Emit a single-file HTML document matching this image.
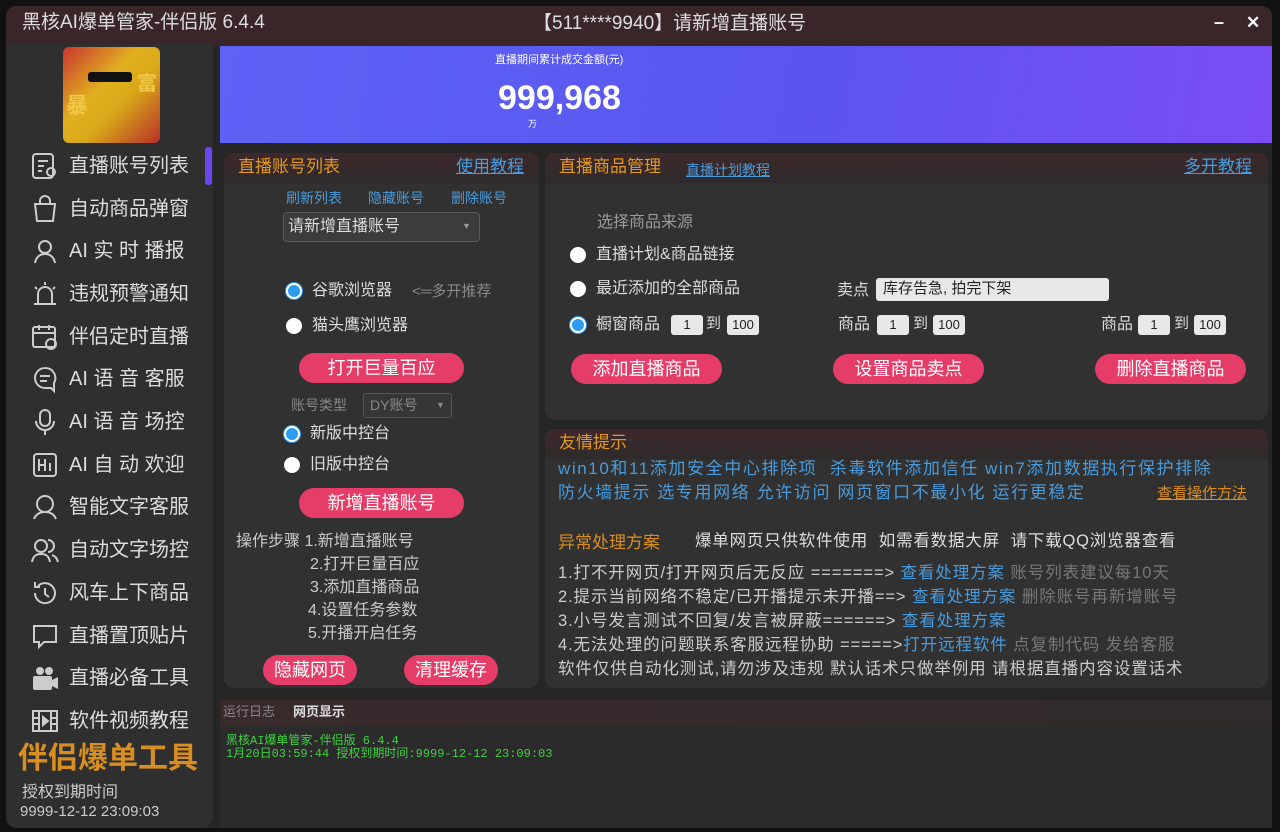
<!DOCTYPE html>
<html><head><meta charset="utf-8"><style>
*{margin:0;padding:0;box-sizing:border-box}
body{width:1280px;height:832px;background:#111;font-family:"Liberation Sans","Noto Sans CJK SC",sans-serif;position:relative;overflow:hidden;color:#ddd}
.a{position:absolute}
.win{left:6px;top:6px;width:1266px;height:822px;background:#262626;border-radius:10px;overflow:hidden}
.title{left:0;top:0;width:1266px;height:40px;background:#3a2629}
.side{left:6px;top:44px;width:207px;height:784px;background:#2f2f2f;border-radius:0 0 12px 12px}
.nav{position:absolute;left:30px;font-size:20px;color:#ddd;white-space:nowrap;line-height:22px}
.nav svg{position:absolute;left:0;top:-4px}
.nav span{position:absolute;left:39px;top:0}
.panel{background:#313131;border-radius:10px;overflow:hidden}
.ph{height:30px;background:linear-gradient(#3e282b,#2e2a2b);color:#e39a1c;font-size:17px;padding:3px 0 0 14px;line-height:22px}
.btn{position:absolute;height:30px;background:#e53d67;border-radius:15px;color:#fff;font-size:18px;text-align:center;line-height:30px}
.lnk{color:#4a9bdc;text-decoration:underline}
.radio{position:absolute;width:16px;height:16px;border-radius:50%;background:#fff}
.radio.on{background:#2c9bf0;border:2px solid #fff;box-shadow:0 0 0 1px #2c9bf0}
.t{position:absolute;white-space:nowrap;line-height:1.2}
.num{position:absolute;height:20px;background:#e8e8e8;color:#222;font-size:13px;text-align:center;line-height:20px;border-radius:3px}
.wide{letter-spacing:1.6px}
</style></head><body>
<div class="a win"></div>
<div class="a title" style="left:6px;top:6px;border-radius:10px 10px 0 0"></div>
<div class="t" style="left:22px;top:12px;font-size:19px;color:#ddd">黑核AI爆单管家-伴侣版 6.4.4</div>
<div class="t" style="left:533px;top:13px;font-size:19px;color:#ddd">【511****9940】请新增直播账号</div>
<div class="t" style="left:1214px;top:12px;font-size:18px;color:#fff;font-weight:bold">–</div>
<div class="t" style="left:1246px;top:13px;font-size:17px;color:#fff;font-weight:bold">✕</div>
<div class="a side"></div>
<div class="a" style="left:63px;top:47px;width:97px;height:96px;background:linear-gradient(135deg,#c9352f,#e0b020 40%,#d8a818 60%,#b8302a);border-radius:6px"></div>
<div class="t" style="left:66px;top:93px;font-size:22px;color:#f0c848;font-weight:bold">暴</div>
<div class="t" style="left:137px;top:72px;font-size:20px;color:#f0c848;font-weight:bold">富</div>
<div class="a" style="left:88px;top:72px;width:44px;height:10px;background:#111;border-radius:3px"></div>
<div class="a" style="left:205px;top:147px;width:7px;height:38px;background:#6a46f0;border-radius:3px"></div>

<div class="nav" style="top:155px"><svg width="30" height="30" viewBox="0 0 30 30" fill="none" stroke="#ccc" stroke-width="2"><rect x="3" y="3" width="20" height="24" rx="3"/><path d="M8 10h10M8 15h6M8 20h4"/><circle cx="21" cy="21" r="4"/></svg><span>直播账号列表</span></div>
<div class="nav" style="top:198px"><svg width="30" height="30" viewBox="0 0 30 30" fill="none" stroke="#ccc" stroke-width="2"><path d="M5 10h20l-2 17H7z"/><path d="M10 10V7a5 5 0 0110 0v3"/></svg><span>自动商品弹窗</span></div>
<div class="nav" style="top:240px"><svg width="30" height="30" viewBox="0 0 30 30" fill="none" stroke="#ccc" stroke-width="2"><circle cx="15" cy="11" r="6"/><path d="M5 27c1-6 5-9 10-9s9 3 10 9"/></svg><span>AI 实 时 播报</span></div>
<div class="nav" style="top:283px"><svg width="30" height="30" viewBox="0 0 30 30" fill="none" stroke="#ccc" stroke-width="2"><path d="M8 24V15a7 7 0 0114 0v9M4 25h22M15 3v3M5 8l2 2M25 8l-2 2"/></svg><span>违规预警通知</span></div>
<div class="nav" style="top:326px"><svg width="30" height="30" viewBox="0 0 30 30" fill="none" stroke="#ccc" stroke-width="2"><rect x="3" y="5" width="22" height="20" rx="2"/><path d="M3 11h22M9 3v5M19 3v5"/><circle cx="21" cy="22" r="5"/></svg><span>伴侣定时直播</span></div>
<div class="nav" style="top:368px"><svg width="30" height="30" viewBox="0 0 30 30" fill="none" stroke="#ccc" stroke-width="2"><path d="M15 4a10 10 0 100 20h6l3 3v-8a10 10 0 00-9-15z"/><path d="M10 12h10M10 17h7"/></svg><span>AI 语 音 客服</span></div>
<div class="nav" style="top:411px"><svg width="30" height="30" viewBox="0 0 30 30" fill="none" stroke="#ccc" stroke-width="2"><rect x="10" y="3" width="10" height="16" rx="5"/><path d="M6 14a9 9 0 0018 0M15 23v5"/></svg><span>AI 语 音 场控</span></div>
<div class="nav" style="top:454px"><svg width="30" height="30" viewBox="0 0 30 30" fill="none" stroke="#ccc" stroke-width="2"><rect x="4" y="4" width="22" height="22" rx="3"/><path d="M9 9v12M9 15h6M15 9v12M20 13v8"/></svg><span>AI 自 动 欢迎</span></div>
<div class="nav" style="top:496px"><svg width="30" height="30" viewBox="0 0 30 30" fill="none" stroke="#ccc" stroke-width="2"><circle cx="15" cy="12" r="8"/><path d="M4 27c2-5 6-7 11-7s9 2 11 7"/></svg><span>智能文字客服</span></div>
<div class="nav" style="top:539px"><svg width="30" height="30" viewBox="0 0 30 30" fill="none" stroke="#ccc" stroke-width="2"><circle cx="11" cy="11" r="6"/><path d="M2 27c1-6 4-8 9-8s8 2 9 8M18 5a6 6 0 010 12M22 20c3 1 5 3 6 7"/></svg><span>自动文字场控</span></div>
<div class="nav" style="top:582px"><svg width="30" height="30" viewBox="0 0 30 30" fill="none" stroke="#ccc" stroke-width="2"><path d="M5 15a10 10 0 1 0 3-7M5 4v5h5M15 10v6l4 3"/></svg><span>风车上下商品</span></div>
<div class="nav" style="top:625px"><svg width="30" height="30" viewBox="0 0 30 30" fill="none" stroke="#ccc" stroke-width="2"><path d="M4 5h22v16H14l-5 5v-5H4z"/></svg><span>直播置顶贴片</span></div>
<div class="nav" style="top:667px"><svg width="30" height="30" viewBox="0 0 30 30" fill="#ccc"><circle cx="10" cy="8" r="4"/><circle cx="19" cy="8" r="4"/><rect x="3" y="13" width="19" height="14" rx="2"/><path d="M22 17l6-3v12l-6-3z"/></svg><span>直播必备工具</span></div>
<div class="nav" style="top:710px"><svg width="30" height="30" viewBox="0 0 30 30" fill="none" stroke="#ccc" stroke-width="2"><rect x="3" y="5" width="24" height="20"/><path d="M9 5v20M21 5v20M3 12h6M3 18h6M21 12h6M21 18h6"/><path d="M13 11l5 4-5 4z" fill="#ccc"/></svg><span>软件视频教程</span></div>
<div class="t" style="left:18px;top:741px;font-size:30px;font-weight:bold;color:#d98e22">伴侣爆单工具</div>
<div class="t" style="left:22px;top:783px;font-size:16px;color:#ccc;line-height:20px">授权到期时间</div>
<div class="t" style="left:20px;top:803px;font-size:15px;color:#ccc;line-height:18px">9999-12-12 23:09:03</div>

<div class="a" style="left:220px;top:46px;width:1052px;height:97px;background:linear-gradient(100deg,#5c63f5,#5a55ee 55%,#7b4df2)"></div>
<div class="t" style="left:495px;top:54px;font-size:11px;color:#fff">直播期间累计成交金额(元)</div>
<div class="t" style="left:498px;top:78px;font-size:34px;font-weight:bold;color:#fff">999,968</div>
<div class="t" style="left:528px;top:119px;font-size:9px;color:#fff">万</div>

<!-- left panel -->
<div class="a panel" style="left:224px;top:153px;width:315px;height:535px">
<div class="ph">直播账号列表<span class="lnk" style="position:absolute;left:232px;top:3px;font-size:17px">使用教程</span></div>
</div>
<div class="t" style="left:286px;top:190px;font-size:14px;color:#4a9bdc">刷新列表</div>
<div class="t" style="left:368px;top:190px;font-size:14px;color:#4a9bdc">隐藏账号</div>
<div class="t" style="left:451px;top:190px;font-size:14px;color:#4a9bdc">删除账号</div>
<div class="a" style="left:283px;top:212px;width:197px;height:30px;background:#3c3c3c;border:1px solid #5a5a5a;border-radius:4px"></div>
<div class="t" style="left:288px;top:217px;font-size:16px;color:#ddd">请新增直播账号</div>
<div class="t" style="left:462px;top:221px;font-size:9px;color:#999">▼</div>
<div class="radio on" style="left:286px;top:283px"></div>
<div class="t" style="left:312px;top:281px;font-size:16px;color:#ddd">谷歌浏览器</div>
<div class="t" style="left:412px;top:283px;font-size:15px;color:#888">&lt;═多开推荐</div>
<div class="radio" style="left:286px;top:318px"></div>
<div class="t" style="left:312px;top:316px;font-size:16px;color:#ddd">猫头鹰浏览器</div>
<div class="btn" style="left:299px;top:353px;width:165px">打开巨量百应</div>
<div class="t" style="left:291px;top:397px;font-size:14px;color:#888">账号类型</div>
<div class="a" style="left:363px;top:393px;width:89px;height:25px;background:#363636;border:1px solid #555;border-radius:3px"></div>
<div class="t" style="left:370px;top:397px;font-size:14px;color:#888">DY账号</div>
<div class="t" style="left:436px;top:400px;font-size:9px;color:#888">▼</div>
<div class="radio on" style="left:284px;top:426px"></div>
<div class="t" style="left:310px;top:424px;font-size:16px;color:#ddd">新版中控台</div>
<div class="radio" style="left:284px;top:457px"></div>
<div class="t" style="left:310px;top:455px;font-size:16px;color:#ddd">旧版中控台</div>
<div class="btn" style="left:299px;top:488px;width:165px">新增直播账号</div>
<div class="t" style="left:236px;top:530px;font-size:16px;color:#ccc;line-height:23px">操作步骤 1.新增直播账号<br><span style="padding-left:74px">2.打开巨量百应</span><br><span style="padding-left:74px">3.添加直播商品</span><br><span style="padding-left:72px">4.设置任务参数</span><br><span style="padding-left:72px">5.开播开启任务</span></div>
<div class="btn" style="left:263px;top:655px;width:94px">隐藏网页</div>
<div class="btn" style="left:404px;top:655px;width:94px">清理缓存</div>

<!-- right top -->
<div class="a panel" style="left:545px;top:153px;width:723px;height:267px">
<div class="ph">直播商品管理<span class="lnk" style="position:absolute;left:141px;top:6px;font-size:14px">直播计划教程</span><span class="lnk" style="position:absolute;left:639px;top:3px;font-size:17px">多开教程</span></div>
</div>
<div class="t" style="left:597px;top:213px;font-size:16px;color:#999">选择商品来源</div>
<div class="radio" style="left:570px;top:247px"></div>
<div class="t" style="left:596px;top:245px;font-size:16px;color:#ddd">直播计划&amp;商品链接</div>
<div class="radio" style="left:570px;top:281px"></div>
<div class="t" style="left:596px;top:279px;font-size:16px;color:#ddd">最近添加的全部商品</div>
<div class="radio on" style="left:570px;top:317px"></div>
<div class="t" style="left:596px;top:315px;font-size:16px;color:#ddd">橱窗商品</div>
<div class="num" style="left:671px;top:315px;width:32px">1</div><div class="t" style="left:706px;top:315px;font-size:15px;color:#ddd">到</div><div class="num" style="left:727px;top:315px;width:32px">100</div>
<div class="t" style="left:837px;top:281px;font-size:16px;color:#ddd">卖点</div>
<div class="a" style="left:876px;top:278px;width:233px;height:23px;background:#e8e8e8;border-radius:3px"></div>
<div class="t" style="left:883px;top:280px;font-size:15px;color:#222">库存告急, 拍完下架</div>
<div class="t" style="left:838px;top:315px;font-size:16px;color:#ddd">商品</div>
<div class="num" style="left:877px;top:315px;width:32px">1</div><div class="t" style="left:913px;top:315px;font-size:15px;color:#ddd">到</div><div class="num" style="left:933px;top:315px;width:32px">100</div>
<div class="t" style="left:1101px;top:315px;font-size:16px;color:#ddd">商品</div>
<div class="num" style="left:1138px;top:315px;width:32px">1</div><div class="t" style="left:1174px;top:315px;font-size:15px;color:#ddd">到</div><div class="num" style="left:1194px;top:315px;width:32px">100</div>
<div class="btn" style="left:571px;top:354px;width:151px">添加直播商品</div>
<div class="btn" style="left:833px;top:354px;width:151px">设置商品卖点</div>
<div class="btn" style="left:1095px;top:354px;width:151px">删除直播商品</div>

<!-- right bottom -->
<div class="a panel" style="left:545px;top:429px;width:723px;height:259px">
<div class="ph">友情提示</div>
</div>
<div class="t wide" style="left:558px;top:459px;font-size:17px;color:#4a9bdc">win10和11添加安全中心排除项&nbsp; 杀毒软件添加信任 win7添加数据执行保护排除</div>
<div class="t wide" style="left:558px;top:483px;font-size:17px;color:#4a9bdc">防火墙提示 选专用网络 允许访问 网页窗口不最小化 运行更稳定</div>
<div class="t" style="left:1157px;top:485px;font-size:15px;color:#d98e22;text-decoration:underline">查看操作方法</div>
<div class="t" style="left:558px;top:533px;font-size:17px;color:#d98e22">异常处理方案</div>
<div class="t wide" style="left:695px;top:532px;font-size:16.5px;color:#ddd;letter-spacing:0.8px">爆单网页只供软件使用&nbsp; 如需看数据大屏&nbsp; 请下载QQ浏览器查看</div>
<div class="t" style="left:558px;top:561px;font-size:16.5px;color:#ccc;line-height:24px;letter-spacing:0.9px">1.打不开网页/打开网页后无反应 =======&gt; <b style="color:#4a9bdc;font-weight:normal">查看处理方案</b> <span style="color:#777">账号列表建议每10天</span><br>2.提示当前网络不稳定/已开播提示未开播==&gt; <b style="color:#4a9bdc;font-weight:normal">查看处理方案</b> <span style="color:#777">删除账号再新增账号</span><br>3.小号发言测试不回复/发言被屏蔽======&gt; <b style="color:#4a9bdc;font-weight:normal">查看处理方案</b><br>4.无法处理的问题联系客服远程协助 =====&gt;<b style="color:#4a9bdc;font-weight:normal">打开远程软件</b> <span style="color:#777">点复制代码 发给客服</span><br>软件仅供自动化测试,请勿涉及违规 默认话术只做举例用 请根据直播内容设置话术</div>

<!-- log -->
<div class="a" style="left:220px;top:700px;width:1052px;height:128px;background:#2b2b2b;border-radius:8px 0 0 0"></div>
<div class="a" style="left:220px;top:700px;width:1052px;height:26px;background:linear-gradient(90deg,#3a2a2c,#2f2a2b)"></div>
<div class="t" style="left:223px;top:704px;font-size:13px;color:#888">运行日志</div>
<div class="t" style="left:293px;top:704px;font-size:13px;color:#ddd;font-weight:bold">网页显示</div>
<div class="t" style="left:226px;top:735px;font-size:12px;color:#3fd23f;font-family:'Liberation Mono','Noto Sans CJK SC',monospace;line-height:13px">黑核AI爆单管家-伴侣版 6.4.4<br>1月20日03:59:44 授权到期时间:9999-12-12 23:09:03</div>
</body></html>
